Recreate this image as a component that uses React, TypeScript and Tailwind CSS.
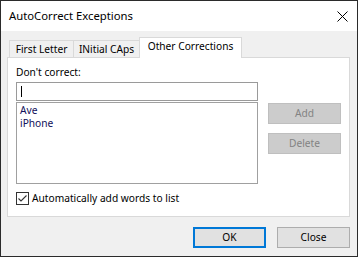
import React, { useState } from 'react';

const font = { fontFamily: '"Noto Sans", "Open Sans", sans-serif' };

const Tab: React.FC<{ label: string; active?: boolean; className?: string }> = ({ label, active, className }) =>
    active ? (
        <div className={`relative z-10 h-[21px] -mb-px bg-white border border-b-0 border-[#d9d9d9] flex items-center justify-center pb-[2px] ${className ?? ''}`}>
            {label}
        </div>
    ) : (
        <div className={`h-[17px] bg-[#f0f0f0] border-t border-[#d9d9d9] flex items-center justify-center pt-[1px] ${className ?? ''}`}>
            {label}
        </div>
    );

const WinButton: React.FC<{ label: string; disabled?: boolean; primary?: boolean }> = ({ label, disabled, primary }) => {
    if (disabled) {
        return (
            <button disabled className="w-[73px] h-[21px] bg-[#cccccc] border border-[#bfbfbf] text-[#838383] leading-none">
                {label}
            </button>
        );
    }
    return (
        <button
            className={`w-[73px] h-[21px] bg-[#e1e1e1] leading-none text-black ${primary ? 'border-2 border-[#0078d7]' : 'border border-[#adadad]'}`}
        >
            {label}
        </button>
    );
};

export default function App() {
    const [autoAdd, setAutoAdd] = useState(true);
    const [word, setWord] = useState('');

    return (
        <div style={font} className="w-[358px] h-[257px] border border-[#2b2b2b] bg-[#f0f0f0] flex flex-col text-[10.2px] text-black select-none">
            {/* title bar */}
            <div className="h-[30px] shrink-0 bg-white flex items-center justify-between pl-[8px] pr-[9px]">
                <span className="text-[11.3px]">AutoCorrect Exceptions</span>
                <svg width="11" height="11" viewBox="0 0 11 11" className="mt-[1px]">
                    <path d="M0.5 0.5 L10.5 10.5 M10.5 0.5 L0.5 10.5" stroke="#000" strokeWidth="1" fill="none" />
                </svg>
            </div>

            <div className="flex flex-col ml-[6px] mr-[7px]">
                {/* tabs */}
                <div className="mt-[6px] h-[20px] flex items-end pl-[2px]">
                    <Tab label="First Letter" className="w-[65px] border-l border-r" />
                    <Tab label="INitial CAps" className="w-[65px]" />
                    <Tab label="Other Corrections" active className="w-[103px]" />
                </div>

                {/* panel */}
                <div className="h-[160px] bg-white border border-[#d9d9d9] flex flex-col pl-[8px]">
                    <div className="mt-[8px] h-[12px] leading-[12px]">Don't correct:</div>
                    <div className="mt-[4px] flex">
                        <div className="w-[242px] flex flex-col">
                            <div className="h-[19px] border border-[#9a9a9a] bg-white flex items-center pl-[4px]">
                                <input
                                    value={word}
                                    onChange={(e) => setWord(e.target.value)}
                                    className="w-full h-[15px] outline-none bg-transparent text-[10.2px]"
                                />
                                {word === '' && <span className="absolute w-px h-[11px] bg-black" />}
                            </div>
                            <div className="mt-[1px] h-[82px] border border-[#a0a0a0] bg-white pl-[3px] pt-[1px] text-[#10105a] leading-[13px]">
                                <div>Ave</div>
                                <div>iPhone</div>
                            </div>
                        </div>
                        <div className="ml-[10px] pt-[21px] flex flex-col gap-[9px]">
                            <WinButton label="Add" disabled />
                            <WinButton label="Delete" disabled />
                        </div>
                    </div>
                    <label className="mt-[8px] h-[13px] flex items-center gap-[3px]">
                        <span
                            onClick={() => setAutoAdd(!autoAdd)}
                            className="w-[13px] h-[13px] border border-[#333333] bg-white flex items-center justify-center"
                        >
                            {autoAdd && (
                                <svg width="11" height="11" viewBox="0 0 11 11">
                                    <path d="M1.5 5.5 L4 8 L9.5 2.5" stroke="#333" strokeWidth="1.1" fill="none" />
                                </svg>
                            )}
                        </span>
                        <span>Automatically add words to list</span>
                    </label>
                </div>

                {/* footer */}
                <div className="mt-[10px] flex justify-end gap-[11px]">
                    <WinButton label="OK" primary />
                    <WinButton label="Close" />
                </div>
            </div>
        </div>
    );
}
